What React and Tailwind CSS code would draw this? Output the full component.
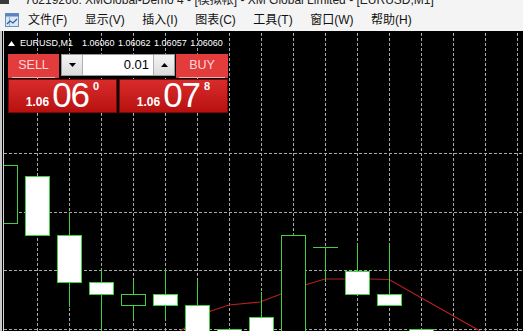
import React from "react";

const menu = ["文件(F)", "显示(V)", "插入(I)", "图表(C)", "工具(T)", "窗口(W)", "帮助(H)"];

// c = centre x, t/b = body top/bottom, wt/wb = wick; bull candles are black
const candles = [
  { c: 5, t: 165, b: 223, bull: true },
  { c: 37, t: 176, b: 235 },
  { c: 69, t: 235, b: 282, wt: 212, wb: 307 },
  { c: 101, t: 282, b: 294, wt: 269, wb: 340 },
  { c: 133, t: 294, b: 305, wt: 280, wb: 319, bull: true },
  { c: 165, t: 294, b: 305, wt: 269, wb: 319 },
  { c: 197, t: 305, b: 345, wt: 280, wb: 345 },
  { c: 229, t: 329, b: 345 },
  { c: 261, t: 317, b: 345, wt: 292, wb: 345 },
  { c: 293, t: 235, b: 345, wt: 233, wb: 345, bull: true },
  { c: 325, t: 247, b: 247, wt: 247, wb: 282 },
  { c: 357, t: 271, b: 294, wt: 244, wb: 294 },
  { c: 389, t: 294, b: 305, wt: 244, wb: 294 },
  { c: 421, t: 329, b: 345 },
];

const ma = "180,331 211,311 229,305 260,302 281,294 305,285 325,279 345,279 369,279 389,279.5 480,331";

function Chart() {
  const vx = Array.from({ length: 16 }, (_, i) => 37 + i * 32);
  const hy = [153, 212, 270, 329];
  return (
    <svg className="absolute inset-0" width="521" height="300" viewBox="2 31 521 300">
      <defs>
        <clipPath id="plot">
          <rect x="4" y="32" width="520" height="300" />
        </clipPath>
      </defs>
      <line x1="3.5" y1="31" x2="3.5" y2="331" stroke="#d0d0d0" />
      <g clipPath="url(#plot)">
        {vx.map((x) => (
          <line key={x} x1={x + 0.5} y1="33" x2={x + 0.5} y2="331" stroke="#a9a9a9" strokeDasharray="3 2" />
        ))}
        {hy.map((y) => (
          <line key={y} x1="4" y1={y + 0.5} x2="523" y2={y + 0.5} stroke="#a9a9a9" strokeDasharray="3 2" />
        ))}
        <polyline points={ma} fill="none" stroke="#b42020" strokeWidth="1.2" />
        {candles.map((k) => (
          <g key={k.c}>
            {k.wt != null && (
              <line x1={k.c + 0.5} y1={k.wt} x2={k.c + 0.5} y2={k.wb} stroke="#42d042" />
            )}
            {k.t === k.b ? (
              <line x1={k.c - 12} y1={k.t + 0.5} x2={k.c + 13} y2={k.t + 0.5} stroke="#42d042" />
            ) : (
              <rect
                x={k.c - 11.5}
                y={k.t + 0.5}
                width="24"
                height={k.b - k.t}
                fill={k.bull ? "#000" : "#fff"}
                stroke="#42d042"
              />
            )}
          </g>
        ))}
      </g>
    </svg>
  );
}

function Tri({ up }) {
  return (
    <svg width="7" height="4" viewBox="0 0 7 4">
      <polygon points={up ? "0,4 7,4 3.5,0" : "0,0 7,0 3.5,4"} fill="#000" />
    </svg>
  );
}

function PriceBox({ big, small }) {
  return (
    <div className="flex h-[34px] items-start justify-center border border-[#7d0606] bg-gradient-to-b from-[#d92b2b] to-[#b80f0f] text-white">
      <span className="mt-[15px] text-[12px] font-bold leading-[14px]">1.06</span>
      <span className="ml-[3px] mt-[-3px] text-[35px] leading-[36px] tracking-[-1px]">{big}</span>
      <span className="ml-[4px] mt-[0px] text-[11px] font-bold leading-[12px]">{small}</span>
    </div>
  );
}

export default function App() {
  return (
    <div
      className="w-[523px] h-[331px] overflow-hidden bg-[#f0f0f0]"
      style={{ fontFamily: '"Liberation Sans", "Noto Sans CJK SC", sans-serif' }}
    >
      <div className="relative h-[9px] overflow-hidden bg-[#f4f4f4]">
        <div className="absolute left-0 top-0 h-[4px] w-[9px] bg-[#3a3a3a]" />
        <div className="ml-[25px] mt-[-8px] whitespace-nowrap text-[12px] leading-[16px] text-[#222]">
          76219266: XMGlobal-Demo 4 - [模拟帐] - XM Global Limited - [EURUSD,M1]
        </div>
      </div>
      <div className="flex h-[22px] items-center bg-[#f4f4f4] text-[12px] text-[#111]">
        <svg className="ml-[5px]" width="14" height="14" viewBox="0 0 14 14">
          <rect x="0.5" y="0.5" width="13" height="13" fill="#dbe8f6" stroke="#6b8fbf" />
          <rect x="0.5" y="0.5" width="13" height="3" fill="#5a84c0" />
          <line x1="4.5" y1="4" x2="4.5" y2="13" stroke="#9ab4d8" />
          <polyline points="2,11 5,8 8,10 12,6" fill="none" stroke="#2d5ea8" strokeWidth="1.2" />
        </svg>
        <div className="ml-[9px] flex gap-[17.5px]">
          {menu.map((m) => (
            <span key={m} className="whitespace-nowrap">{m}</span>
          ))}
        </div>
      </div>
      <div className="relative h-[300px] border-l-2 border-[#c8c8c8] bg-black">
        <Chart />
        <div className="absolute left-[6px] top-[6px] flex items-center text-[9px] leading-[12px] text-white">
          <svg width="7" height="5" viewBox="0 0 7 5">
            <polygon points="0,5 7,5 3.5,0" fill="#fff" />
          </svg>
          <span className="ml-[5px]">EURUSD,M1</span>
          <span className="ml-[9px]">1.06060</span>
          <span className="ml-[3.5px]">1.06062</span>
          <span className="ml-[3.5px]">1.06057</span>
          <span className="ml-[3.5px]">1.06060</span>
        </div>
        <div className="absolute left-[6px] top-[23px] w-[220px]">
          <div className="flex h-[24px]">
            <div className="flex w-[51px] flex-col bg-[#e33c3c]">
              <div className="flex flex-1 items-center justify-center text-[12.5px] text-[#ffd9d9]">SELL</div>
              <div className="mx-[4px] h-px bg-[#f7b0b0]" />
            </div>
            <div className="ml-[2px] flex h-[22px] w-[114px] border border-[#9a9a9a] bg-white">
              <div className="flex w-[21px] items-center justify-center border-r border-[#b0b0b0] bg-gradient-to-b from-[#f4f4f4] to-[#dcdcdc]">
                <Tri />
              </div>
              <div className="flex flex-1 items-center justify-end pr-[4px] text-[13px] text-black">0.01</div>
              <div className="flex w-[21px] items-center justify-center border-l border-[#b0b0b0] bg-gradient-to-b from-[#f4f4f4] to-[#dcdcdc]">
                <Tri up />
              </div>
            </div>
            <div className="ml-[1px] flex flex-1 flex-col bg-[#e33c3c]">
              <div className="flex flex-1 items-center justify-center text-[12.5px] text-[#ffd9d9]">BUY</div>
              <div className="mx-[3px] h-px bg-[#f7b0b0]" />
            </div>
          </div>
          <div className="mt-[1px] flex gap-[2px]">
            <div className="w-[109px]">
              <PriceBox big="06" small="0" />
            </div>
            <div className="flex-1">
              <PriceBox big="07" small="8" />
            </div>
          </div>
        </div>
      </div>
    </div>
  );
}
